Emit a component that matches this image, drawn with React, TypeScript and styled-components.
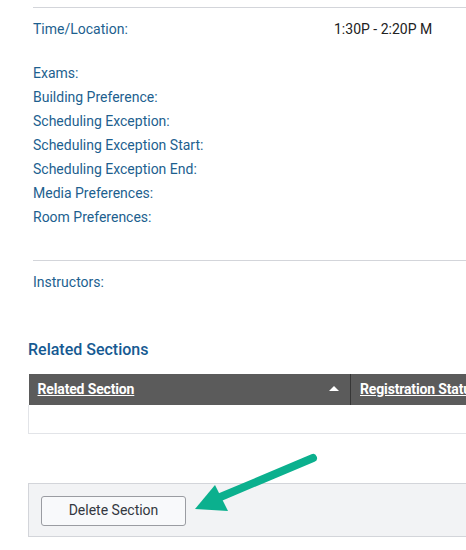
import { createGlobalStyle, styled } from "styled-components";

const GlobalStyle = createGlobalStyle`
  html, body {
    margin: 0;
    padding: 0;
    background: #ffffff;
    overflow: hidden;
  }
  body {
    font-family: Roboto, "Liberation Sans", Arial, sans-serif;
  }
`;

const details = [
  "Exams:",
  "Building Preference:",
  "Scheduling Exception:",
  "Scheduling Exception Start:",
  "Scheduling Exception End:",
  "Media Preferences:",
  "Room Preferences:",
];

export default function App() {
  return (
    <Page>
      <GlobalStyle />
      <Details>
        <Rule />
        <Row $top={9}>
          <Label>Time/Location:</Label>
          <Value>1:30P - 2:20P M</Value>
        </Row>
        <Group>
          {details.map((d) => (
            <Row key={d}>
              <Label>{d}</Label>
            </Row>
          ))}
        </Group>
        <Rule $top={31} />
        <Row $top={9}>
          <Label>Instructors:</Label>
        </Row>
      </Details>

      <SectionTitle>Related Sections</SectionTitle>
      <Table>
        <thead>
          <tr>
            <HeadCell $width={322}>
              <HeadInner>
                <HeadLink>Related Section</HeadLink>
                <SortUp />
              </HeadInner>
            </HeadCell>
            <HeadCell>
              <HeadLink>Registration Status</HeadLink>
            </HeadCell>
          </tr>
        </thead>
        <tbody>
          <tr>
            <BodyCell colSpan={2} />
          </tr>
        </tbody>
      </Table>

      <Footer>
        <Button type="button">Delete Section</Button>
      </Footer>

      <Arrow width="466" height="550" viewBox="0 0 466 550">
        <line
          x1="313"
          y1="458"
          x2="218"
          y2="498"
          stroke="#0bb08e"
          strokeWidth="8"
          strokeLinecap="round"
        />
        <polygon points="195,509 215,485 228,511" fill="#0bb08e" />
      </Arrow>
    </Page>
  );
}

const Page = styled.div`
  position: relative;
  width: 620px;
  height: 550px;
  padding: 7px 0 0 28px;
  box-sizing: border-box;
`;

const Details = styled.div`
  margin-left: 5px;
`;

const Rule = styled.div<{ $top?: number }>`
  height: 1px;
  background: #d3d5da;
  margin-top: ${(p) => p.$top ?? 0}px;
`;

const Group = styled.div`
  margin-top: 20px;
`;

const Row = styled.div<{ $top?: number }>`
  display: flex;
  height: 24px;
  align-items: center;
  margin-top: ${(p) => p.$top ?? 0}px;
  font-size: 14px;
`;

const Label = styled.span`
  width: 301px;
  color: #1d5f8f;
`;

const Value = styled.span`
  color: #222222;
`;

const SectionTitle = styled.h2`
  margin: 46px 0 0;
  font-size: 16px;
  line-height: 20px;
  font-weight: 500;
  color: #165a92;
`;

const Table = styled.table`
  margin-top: 14px;
  width: 100%;
  border-collapse: collapse;
  font-size: 14px;
`;

const HeadCell = styled.th<{ $width?: number }>`
  background: #5b5b5b;
  height: 31px;
  padding: 0 9px 2px;
  text-align: left;
  border-right: 1px solid #363636;
  box-sizing: border-box;
  width: ${(p) => (p.$width ? `${p.$width}px` : "auto")};
  white-space: nowrap;
`;

const HeadInner = styled.div`
  display: flex;
  align-items: center;
  justify-content: space-between;
`;

const HeadLink = styled.span`
  color: #ffffff;
  font-weight: 700;
  letter-spacing: -0.15px;
  text-decoration: underline;
`;

const SortUp = styled.span`
  width: 0;
  height: 0;
  margin-right: 2px;
  border-left: 5px solid transparent;
  border-right: 5px solid transparent;
  border-bottom: 5px solid #ffffff;
`;

const BodyCell = styled.td`
  height: 28px;
  padding: 0;
  background: #ffffff;
  border: 1px solid #e2e4e8;
  border-top: none;
`;

const Footer = styled.div`
  margin-top: 49px;
  padding: 12px;
  background: #f2f3f5;
  border: 1px solid #d3d5da;
  height: 54px;
  box-sizing: border-box;
`;

const Button = styled.button`
  width: 145px;
  height: 30px;
  padding: 0 0 2px;
  background: #f8f9fb;
  border: 1px solid #9a9ca2;
  border-radius: 3px;
  font-family: Roboto, "Liberation Sans", Arial, sans-serif;
  font-size: 14px;
  color: #333740;
  cursor: pointer;
`;

const Arrow = styled.svg`
  position: absolute;
  left: 0;
  top: 0;
  pointer-events: none;
`;
